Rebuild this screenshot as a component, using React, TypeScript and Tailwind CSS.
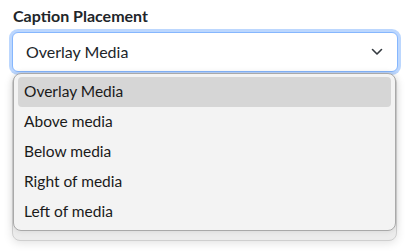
import React from "react"

const options = ["Overlay Media", "Above media", "Below media", "Right of media", "Left of media"]

export default function App() {
  const font = { fontFamily: "Lato, 'Noto Sans', sans-serif" }
  return (
    <div className="h-[252px] w-[409px] overflow-hidden bg-white px-[12px] pt-[6px]" style={font}>
      <div className="mb-[6px] pl-[1px] text-[16px] font-bold leading-[20px] text-[#212529]">Caption Placement</div>
      <div className="relative">
        <div className="flex h-[40px] w-[386px] items-center justify-between rounded-[6px] border border-[#86b7fe] bg-white pl-[13px] pr-[14px] text-[16px] text-[#212529] shadow-[0_0_0_3px_rgba(13,110,253,0.28)]">
          <span>Overlay Media</span>
          <svg width="12" height="8" viewBox="0 0 12 8" fill="none" stroke="#343a40" strokeWidth="1.6" strokeLinecap="round" strokeLinejoin="round">
            <path d="M1.5 1.5 6 6l4.5-4.5" />
          </svg>
        </div>

        {/* native popup + its shadow */}
        <div className="absolute left-[0px] top-[43px] h-[166px] w-[385px] rounded-[8px] border border-[#cfcfcf] bg-[#ececec] shadow-[0_2px_10px_rgba(0,0,0,0.12)]" />
        <div className="absolute left-[1px] top-[41px] w-[383px] rounded-[8px] border border-[#a9a9a9] bg-[#f3f3f3] px-[4px] pb-[3px] pt-[3px] shadow-[0_0_6px_rgba(0,0,0,0.10)]">
          {options.map((o, i) => (
            <div
              key={o}
              className={
                "flex h-[30px] items-center rounded-[4px] pl-[6px] text-[15.5px] text-[#1a1a1a] " +
                (i === 0 ? "bg-[#d6d6d6]" : "")
              }
            >
              {o}
            </div>
          ))}
        </div>
      </div>
    </div>
  )
}
